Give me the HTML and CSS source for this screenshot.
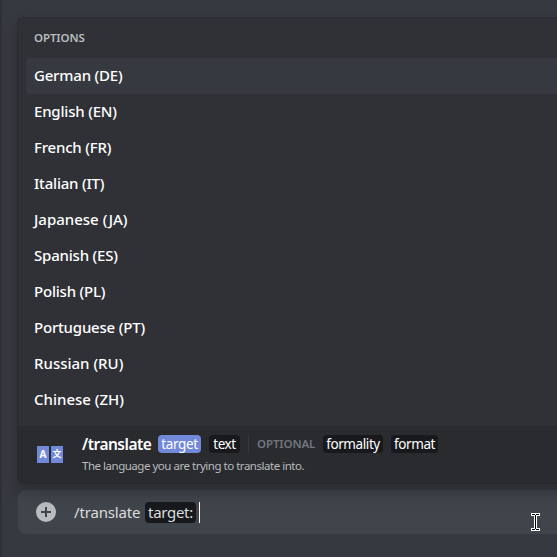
FILE: index.html
```
<!DOCTYPE html>
<html lang="en">
<head>
<meta charset="utf-8">
<title>Translate command</title>
<link rel="stylesheet" href="styles.css">
</head>
<body>
<main class="chat">
  <section class="popup">
    <div class="options">
      <h2 class="heading">OPTIONS</h2>
      <ul class="list">
        <li class="option selected"><span>German (DE)</span></li>
        <li class="option"><span>English (EN)</span></li>
        <li class="option"><span>French (FR)</span></li>
        <li class="option"><span>Italian (IT)</span></li>
        <li class="option roomy"><span>Japanese (JA)</span></li>
        <li class="option"><span>Spanish (ES)</span></li>
        <li class="option"><span>Polish (PL)</span></li>
        <li class="option"><span>Portuguese (PT)</span></li>
        <li class="option roomy"><span>Russian (RU)</span></li>
        <li class="option roomy"><span>Chinese (ZH)</span></li>
      </ul>
    </div>
    <div class="command">
      <div class="app-icon"><span class="tile">A</span><span class="tile cjk">文</span></div>
      <div class="details">
        <div class="usage">
          <strong class="name">/translate</strong>
          <span class="chip active target">target</span>
          <span class="chip text">text</span>
          <span class="divider"></span>
          <span class="optional">OPTIONAL</span>
          <span class="chip formality">formality</span>
          <span class="chip format">format</span>
        </div>
        <p class="description">The language you are trying to translate into.</p>
      </div>
    </div>
  </section>
  <div class="composer">
    <svg class="add" viewBox="0 0 20 20" width="20" height="20"><circle cx="10" cy="10" r="10" fill="#b9bbbe"/><path d="M10 5v10M5 10h10" stroke="#40444b" stroke-width="2"/></svg>
    <span class="typed">/translate</span>
    <span class="argument">target:</span>
    <span class="caret"></span>
  </div>
  <svg class="pointer" viewBox="0 0 9 18" width="9" height="18" shape-rendering="crispEdges"><path d="M0 0h9v3H6v12h3v3H0v-3h3V3H0z" fill="#fff"/><path d="M1 1h3v1h1V1h3v1H5v14h3v1H5v-1H4v1H1v-1h3V2H1z" fill="#000"/></svg>
</main>
</body>
</html>
```
FILE: styles.css
```
* { box-sizing: border-box; }
body { margin: 0; background: #36393f; font-family: "Noto Sans", "Open Sans", sans-serif; }
.chat { position: relative; width: 557px; height: 557px; overflow: hidden; padding: 18px 0 0 16px; border-left: 2px solid #2f3136; background: #36393f; }
.popup { position: relative; z-index: 1; width: 560px; height: 465px; border-radius: 5px; background: #2f3136; box-shadow: 0 0 0 1px rgba(4,4,5,.15), 0 8px 16px rgba(0,0,0,.24); overflow: hidden; }
.options { height: 408px; padding: 0 0 0 8px; }
.heading { margin: 0; padding-left: 8px; height: 40px; line-height: 40px; font-size: 11.5px; font-weight: 600; letter-spacing: -.1px; color: #b9bbbe; }
.list { margin: 0; padding: 0; list-style: none; }
.option { height: 36px; padding-left: 8px; border-radius: 3px; line-height: 35px; font-size: 15px; font-weight: 500; letter-spacing: -.2px; color: #fff; }
.roomy { letter-spacing: 0; }
.selected { background: #36393f; }
.command { display: flex; height: 57px; padding-left: 19px; background: #292b2f; }
.app-icon { display: flex; gap: 2px; width: 45px; padding-top: 20px; }
.tile { width: 12px; height: 17px; background: #7289da; color: #fff; font: bold 10px/17px "Noto Sans", sans-serif; text-align: center; }
.cjk { font: bold 9px/16px "Noto Sans CJK SC", sans-serif; }
.usage { display: flex; align-items: center; height: 18px; margin-top: 9px; line-height: 18px; white-space: nowrap; }
.name { width: 76px; font-size: 15.5px; font-weight: 600; letter-spacing: -.5px; color: #fff; }
.chip { height: 18px; margin-right: 8px; border-radius: 4px; background: #18191c; color: #fff; font-size: 13.5px; line-height: 18px; text-align: center; letter-spacing: -.4px; }
.active { background: #7289da; }
.target { width: 43px; }
.text { width: 31px; }
.formality { width: 60px; }
.format { width: 47px; }
.divider { width: 1px; height: 16px; margin-right: 8px; background: #36393f; }
.optional { width: 66px; font-size: 11.5px; font-weight: 600; letter-spacing: -.1px; color: #72767d; }
.description { margin: 4px 0 0; font-size: 11.5px; line-height: 18px; letter-spacing: -.48px; color: #b9bbbe; }
.composer { display: flex; align-items: center; width: 560px; height: 44px; margin-top: 7px; padding-left: 18px; border-radius: 8px; background: #40444b; color: #dcddde; font-size: 15px; letter-spacing: -.15px; }
.add { margin-right: 18px; }
.typed { width: 71px; line-height: 20px; padding-bottom: 1px; }
.argument { width: 51px; height: 21px; border-radius: 4px; background: #18191c; line-height: 20px; text-align: center; letter-spacing: -.3px; }
.caret { width: 1px; height: 21px; margin-left: 3px; background: #fff; }
.pointer { position: absolute; left: 529px; top: 513px; }
```
